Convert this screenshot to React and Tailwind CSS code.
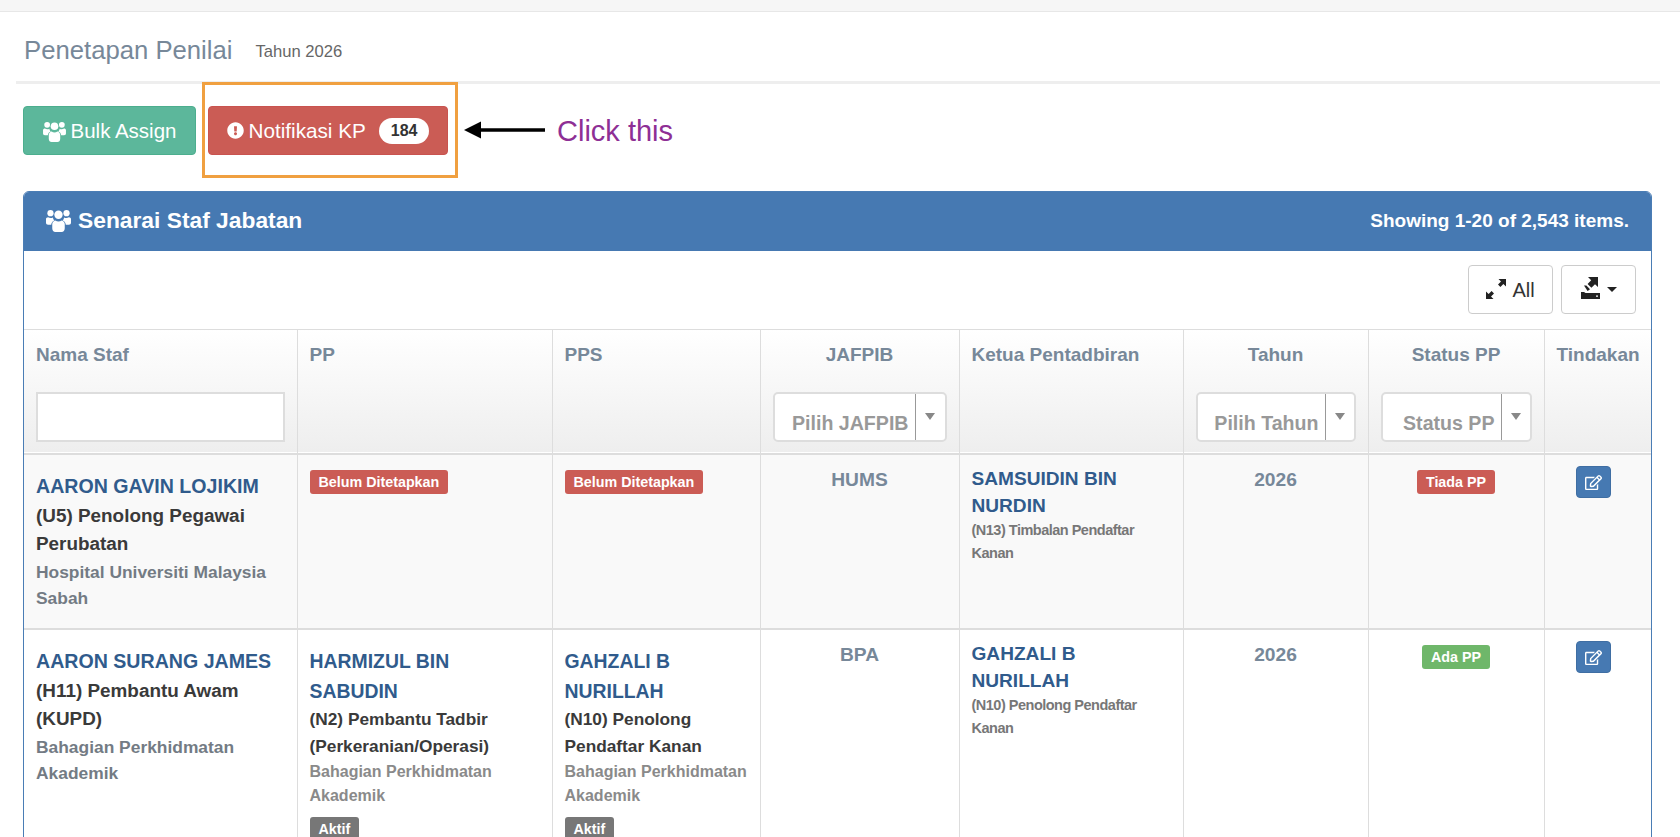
import { FaExclamationCircle, FaRegEdit } from "react-icons/fa";

const cols = [273, 255, 208, 199, 224, 185, 176, 107];

function UsersIcon({ className }) {
  return (
    <svg className={className} viewBox="0 0 24 22" fill="currentColor">
      <circle cx="4.3" cy="4" r="3" />
      <circle cx="19.7" cy="4" r="3" />
      <circle cx="12" cy="5.5" r="4" />
      <path d="M0 9.5 C0 8.5 1 7.8 2 7.8 C3.3 8.8 5.4 8.8 6.6 8 C6.9 9.6 7.4 10.4 8.2 11 C6.4 11.6 5.2 12.8 5 15 H2 C0.8 15 0 14.4 0 13.2 Z" />
      <path d="M24 9.5 C24 8.5 23 7.8 22 7.8 C20.7 8.8 18.6 8.8 17.4 8 C17.1 9.6 16.6 10.4 15.8 11 C17.6 11.6 18.8 12.8 19 15 H22 C23.2 15 24 14.4 24 13.2 Z" />
      <path d="M6 14.5 C6 12.8 7.4 11.2 9 11 C10.6 12.4 13.4 12.4 15 11 C16.6 11.2 18 12.8 18 14.5 V18.5 C18 20.6 16.8 22 15 22 H9 C7.2 22 6 20.6 6 18.5 Z" />
    </svg>
  );
}

function Label({ color, children }) {
  return (
    <span className={`inline-block rounded-[3px] px-[9px] py-[4px] text-[14.3px] leading-[16px] font-bold text-white ${color}`}>
      {children}
    </span>
  );
}

function ComboBox({ label, caretW }) {
  return (
    <div className="flex h-[50px] rounded-[5px] border-2 border-[#ddd] bg-white">
      <div className="flex-1 overflow-hidden pt-[16px] pr-[6px] text-right text-[19.6px] leading-[26px] font-bold whitespace-nowrap text-[#999]">
        {label}
      </div>
      <div className={`flex justify-center border-l border-[#999] pt-[19px] ${caretW}`}>
        <span className="h-0 w-0 border-x-[5px] border-t-[7px] border-x-transparent border-t-[#888]" />
      </div>
    </div>
  );
}

function Staff({ name, role, dept }) {
  return (
    <div>
      <div className="text-[19.6px] leading-[29.5px] font-bold text-[#305b8c]">{name}</div>
      <div className="text-[18.9px] leading-[28.5px] font-bold text-[#3a3a3a]">{role}</div>
      <div className="text-[17.4px] leading-[26.5px] font-bold text-[#737b84]">{dept}</div>
    </div>
  );
}

function Person({ name, role, dept }) {
  return (
    <div>
      <div className="text-[19.4px] leading-[30px] font-bold text-[#305b8c]">{name}</div>
      <div className="text-[17.3px] leading-[27px] font-bold text-[#3a3a3a]">{role}</div>
      <div className="text-[16px] leading-[23.5px] font-bold text-[#8a8a8a]">{dept}</div>
      <div className="pt-[10px]">
        <Label color="bg-[#777]">Aktif</Label>
      </div>
    </div>
  );
}

function Kp({ name, role }) {
  return (
    <div>
      <div className="text-[19.1px] leading-[26.5px] font-bold text-[#305b8c]">{name}</div>
      <div className="text-[14.5px] leading-[22.5px] font-bold tracking-[-0.5px] text-[#777]">{role}</div>
    </div>
  );
}

function EditBtn() {
  return (
    <button className="ml-[19px] flex h-[32px] w-[35px] items-center justify-center rounded-[4px] border border-[#3f6ea3] bg-[#4679b2] text-[17px] text-white">
      <FaRegEdit />
    </button>
  );
}

const thBase = "border-r border-[#ddd] px-[12px] pt-[12px] align-top text-[19px] leading-[26px] font-bold text-[#778899] last:border-r-0";
const tdBase = "border-r border-[#ddd] px-[12px] align-top last:border-r-0";
const plainCell = "pt-[12px] text-center text-[19.2px] leading-[26px] font-bold text-[#778899]";

export default function App() {
  return (
    <div className="h-[837px] overflow-hidden bg-white font-['Liberation_Sans',Arial,sans-serif]">
      <div className="h-[12px] border-b border-[#e7e7e7] bg-[#f6f6f6]" />

      <div className="px-[16px] pr-[20px]">
        <div className="flex h-[72px] items-center gap-[23px] border-b-[3px] border-[#eee] px-[8px] pt-[7px]">
          <h1 className="text-[25.7px] font-normal text-[#778899]">Penetapan Penilai</h1>
          <span className="pt-[5px] text-[16.6px] text-[#666]">Tahun 2026</span>
        </div>
      </div>

      <div className="flex h-[107px] items-start px-[23px]">
        <button className="mt-[22px] flex h-[49px] w-[173px] items-center justify-center gap-[5px] rounded-[4px] border border-[#4cae8e] bg-[#5cb79b] pt-[1px] text-[20.5px] text-white">
          <UsersIcon className="h-[21px] w-[23px]" />
          Bulk Assign
        </button>
        <div className="-mt-[2px] ml-[6px] h-[96px] w-[256px] border-[3px] border-[#f0a040] pt-[21px] pl-[3px]">
          <button className="flex h-[49px] w-[240px] items-center justify-center gap-[5px] rounded-[4px] border border-[#c9534f] bg-[#cb5c55] text-[20.7px] text-white">
            <FaExclamationCircle className="text-[17px]" />
            Notifikasi KP
            <span className="ml-[8px] rounded-[14px] bg-white px-[12px] py-[2px] text-[16px] leading-[22px] font-bold text-[#333]">184</span>
          </button>
        </div>
        <svg className="mt-[34px] ml-[6px]" width="82" height="24" viewBox="0 0 82 24">
          <path d="M0 12 L17 3.5 L17 20.5 Z" fill="#000" />
          <path d="M14 12 H81" stroke="#000" strokeWidth="3.5" />
        </svg>
        <span className="mt-[29px] ml-[11px] text-[29px] leading-[36px] text-[#8e2f95]">Click this</span>
      </div>

      <div className="mr-[28px] ml-[23px] rounded-t-[6px] border border-[#4a7db5]">
        <div className="flex h-[59px] items-center justify-between rounded-t-[5px] bg-[#4679b2] pr-[22px] pl-[22px] text-white">
          <div className="flex items-center gap-[7px] pb-[2px] text-[22.8px] font-bold">
            <UsersIcon className="h-[23px] w-[25px]" />
            Senarai Staf Jabatan
          </div>
          <div className="text-[19px] font-bold">Showing 1-20 of 2,543 items.</div>
        </div>

        <div className="flex h-[79px] items-start justify-end gap-[8px] border-b border-[#ddd] bg-white pt-[14px] pr-[15px]">
          <button className="flex h-[49px] w-[85px] items-center justify-center gap-[6px] rounded-[4px] border border-[#ccc] text-[20px] text-[#333]">
            <svg className="mb-[2px]" width="20" height="20" viewBox="0 0 20 20" fill="#222">
              <path d="M12.5 0 H20 V7.5 L17.4 5 L14.4 8 L12 5.6 L15 2.6 Z" />
              <path d="M0 20 V12.5 L2.6 15 L5.6 12 L8 14.4 L5 17.4 L7.5 20 Z" />
            </svg>
            All
          </button>
          <button className="flex h-[49px] w-[75px] items-center justify-center gap-[7px] rounded-[4px] border border-[#ccc] text-[#333]">
            <svg className="mb-[4px]" width="19" height="22" viewBox="0 0 19 22" fill="#222">
              <path d="M7 0 H17 V10 L14 7.2 L10.4 10.8 L6.6 7 L10.2 3.2 Z" />
              <path d="M3 8.5 L5.4 8.5 L9 12.2 L6.6 14 Z" />
              <path d="M0 15 H3 L4.5 16 H0 Z" />
              <path fillRule="evenodd" d="M0 16 H19 V22 H0 Z M15 18.5 V19.8 H17 V18.5 Z" />
            </svg>
            <span className="h-0 w-0 border-x-[5px] border-t-[5px] border-x-transparent border-t-[#222]" />
          </button>
        </div>

        <table className="w-full table-fixed border-collapse">
          <colgroup>
            {cols.map((w, i) => (
              <col key={i} style={{ width: w }} />
            ))}
          </colgroup>
          <thead>
            <tr className="h-[124px] border-b-2 border-[#ddd] bg-gradient-to-b from-white to-[#eeeeee]">
              <th className={`${thBase} text-left`}>
                Nama Staf
                <div className="mt-[24px] h-[50px] border-2 border-[#ddd] bg-white" />
              </th>
              <th className={`${thBase} text-left`}>PP</th>
              <th className={`${thBase} text-left`}>PPS</th>
              <th className={`${thBase} text-center`}>
                JAFPIB
                <div className="mt-[24px]"><ComboBox label="Pilih JAFPIB" caretW="w-[30px]" /></div>
              </th>
              <th className={`${thBase} text-left`}>Ketua Pentadbiran</th>
              <th className={`${thBase} text-center`}>
                Tahun
                <div className="mt-[24px]"><ComboBox label="Pilih Tahun" caretW="w-[29px]" /></div>
              </th>
              <th className={`${thBase} text-center`}>
                Status PP
                <div className="mt-[24px]"><ComboBox label="Status PP" caretW="w-[29px]" /></div>
              </th>
              <th className={`${thBase} text-center`}>Tindakan</th>
            </tr>
          </thead>
          <tbody>
            <tr className="h-[175px] border-b-2 border-[#ddd] bg-[#f9f9f9]">
              <td className={`${tdBase} pt-[17px]`}>
                <Staff name="AARON GAVIN LOJIKIM" role="(U5) Penolong Pegawai Perubatan" dept="Hospital Universiti Malaysia Sabah" />
              </td>
              <td className={`${tdBase} pt-[15px]`}><Label color="bg-[#cb5c55]">Belum Ditetapkan</Label></td>
              <td className={`${tdBase} pt-[15px]`}><Label color="bg-[#cb5c55]">Belum Ditetapkan</Label></td>
              <td className={`${tdBase} ${plainCell}`}>HUMS</td>
              <td className={`${tdBase} pt-[11px]`}>
                <Kp name="SAMSUIDIN BIN NURDIN" role="(N13) Timbalan Pendaftar Kanan" />
              </td>
              <td className={`${tdBase} ${plainCell}`}>2026</td>
              <td className={`${tdBase} pt-[15px] text-center`}><Label color="bg-[#cb5c55]">Tiada PP</Label></td>
              <td className={`${tdBase} pt-[11px]`}><EditBtn /></td>
            </tr>
            <tr className="bg-white">
              <td className={`${tdBase} pt-[17px]`}>
                <Staff name="AARON SURANG JAMES" role="(H11) Pembantu Awam (KUPD)" dept="Bahagian Perkhidmatan Akademik" />
              </td>
              <td className={`${tdBase} pt-[16px]`}>
                <Person name="HARMIZUL BIN SABUDIN" role="(N2) Pembantu Tadbir (Perkeranian/Operasi)" dept="Bahagian Perkhidmatan Akademik" />
              </td>
              <td className={`${tdBase} pt-[16px]`}>
                <Person name="GAHZALI B NURILLAH" role="(N10) Penolong Pendaftar Kanan" dept="Bahagian Perkhidmatan Akademik" />
              </td>
              <td className={`${tdBase} ${plainCell}`}>BPA</td>
              <td className={`${tdBase} pt-[11px]`}>
                <Kp name="GAHZALI B NURILLAH" role="(N10) Penolong Pendaftar Kanan" />
              </td>
              <td className={`${tdBase} ${plainCell}`}>2026</td>
              <td className={`${tdBase} pt-[15px] text-center`}><Label color="bg-[#6fb76a]">Ada PP</Label></td>
              <td className={`${tdBase} pt-[11px]`}><EditBtn /></td>
            </tr>
          </tbody>
        </table>
      </div>
    </div>
  );
}
